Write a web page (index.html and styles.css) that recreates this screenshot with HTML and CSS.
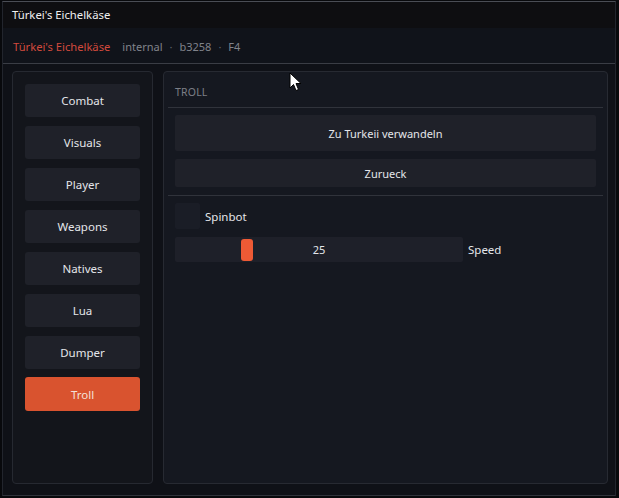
FILE: index.html
```html
<!DOCTYPE html>
<html lang="de">
<head>
    <meta charset="UTF-8">
    <meta name="viewport" content="width=device-width, initial-scale=1.0">
    <title>Türkei's Eichelkäse</title>
    <link rel="stylesheet" href="styles.css">
</head>
<body>
    <div class="window">
        <div class="titlebar">Türkei's Eichelkäse</div>
        <div class="header">
            <span class="brand">Türkei's Eichelkäse</span>
            <span class="meta">internal</span>
            <span class="dot">·</span>
            <span class="meta">b3258</span>
            <span class="dot">·</span>
            <span class="meta">F4</span>
        </div>

        <div class="main">
            <div class="sidebar">
                <button class="tab">Combat</button>
                <button class="tab">Visuals</button>
                <button class="tab">Player</button>
                <button class="tab">Weapons</button>
                <button class="tab">Natives</button>
                <button class="tab">Lua</button>
                <button class="tab">Dumper</button>
                <button class="tab active">Troll</button>
            </div>

            <div class="content">
                <div class="section-title">TROLL</div>
                <div class="sep"></div>
                <div class="actions">
                    <button class="action big">Zu Turkeii verwandeln</button>
                    <button class="action">Zurueck</button>
                </div>
                <div class="sep"></div>
                <div class="options">
                    <label class="check-row">
                        <span class="check"></span>
                        <span>Spinbot</span>
                    </label>
                    <div class="slider-row">
                        <div class="slider">
                            <span class="knob" style="left: 66px"></span>
                            <span class="slider-value">25</span>
                        </div>
                        <span class="slider-label">Speed</span>
                    </div>
                </div>
            </div>
        </div>

        <!-- mouse pointer -->
        <svg class="cursor" width="14" height="20" viewBox="0 0 14 20">
            <path d="M1 1 L1 16 L4.5 12.5 L7 18.5 L9.5 17.5 L7 11.5 L12 11.5 Z" fill="#fff" stroke="#000" stroke-width="1"/>
        </svg>
    </div>
</body>
</html>
```

FILE: styles.css
```css
* {
    box-sizing: border-box;
}
html, body {
    margin: 0;
    height: 100%;
}
body {
    background-color: #08090c;
    font-family: "Noto Sans", "Open Sans", sans-serif;
    color: #e4e6ea;
    padding: 1px 3px 2px 2px;
}
.window {
    position: relative;
    height: 100%;
    display: flex;
    flex-direction: column;
    background-color: #0f1117;
    border: 1px solid #22252d;
    border-top-color: #4a4d55;
    border-bottom-color: #30333b;
}
.titlebar {
    height: 26px;
    padding: 5px 0 0 9px;
    font-size: 11.3px;
    color: #f0f0f0;
    background-color: #0e0e11;
}
.header {
    height: 36px;
    display: flex;
    align-items: center;
    gap: 7px;
    padding: 2px 0 0 10px;
    font-size: 11px;
    background-color: #10131a;
    border-bottom: 1px solid #3a3d45;
}
.brand {
    color: #d24a3d;
    margin-right: 5px;
    font-size: 11.2px;
}
.meta {
    color: #80838b;
}
.dot {
    color: #5e6169;
}
.main {
    flex: 1;
    display: flex;
    gap: 10px;
    padding: 7px 7px 11px 9px;
}
.sidebar {
    width: 141px;
    display: flex;
    flex-direction: column;
    gap: 9px;
    padding: 12px 12px 0 12px;
    background-color: #13151b;
    border: 1px solid #262931;
    border-radius: 4px;
}
button {
    font-family: inherit;
    color: #e4e6ea;
    border: none;
    cursor: pointer;
}
.tab {
    height: 33px;
    font-size: 11.5px;
    background-color: #1f2129;
    border-radius: 3px;
}
.tab.active {
    margin-top: -1px;
    height: 34px;
    background-color: #d9532f;
    color: #f4e0d8;
}
.content {
    flex: 1;
    display: flex;
    flex-direction: column;
    background-color: #151820;
    border: 1px solid #272a32;
    border-radius: 4px;
}
.section-title {
    height: 35px;
    padding: 13px 0 0 11px;
    font-size: 10.5px;
    letter-spacing: 0.2px;
    color: #7c7f87;
}
.sep {
    height: 1px;
    margin: 0 4px;
    background-color: #30333b;
}
.actions {
    display: flex;
    flex-direction: column;
    gap: 8px;
    padding: 7px 11px 8px 11px;
}
.action {
    height: 28px;
    font-size: 11px;
    background-color: #1f2129;
    border-radius: 2px;
}
.action.big {
    height: 36px;
}
.options {
    display: flex;
    flex-direction: column;
    gap: 8px;
    padding: 7px 11px;
}
.check-row {
    display: flex;
    align-items: center;
    gap: 5px;
    font-size: 11.5px;
}
.check {
    width: 25px;
    height: 26px;
    background-color: #1a1d26;
    border-radius: 2px;
}
.slider-row {
    display: flex;
    align-items: center;
    gap: 5px;
    font-size: 11.5px;
}
.slider {
    position: relative;
    width: 288px;
    height: 25px;
    display: flex;
    align-items: center;
    justify-content: center;
    background-color: #1e2029;
    border-radius: 2px;
}
.knob {
    position: absolute;
    top: 2px;
    width: 12px;
    height: 22px;
    background-color: #ee5a35;
    border-radius: 3px;
}
.slider-value {
    font-size: 11px;
}
.cursor {
    position: absolute;
    left: 286px;
    top: 70px;
}
```
